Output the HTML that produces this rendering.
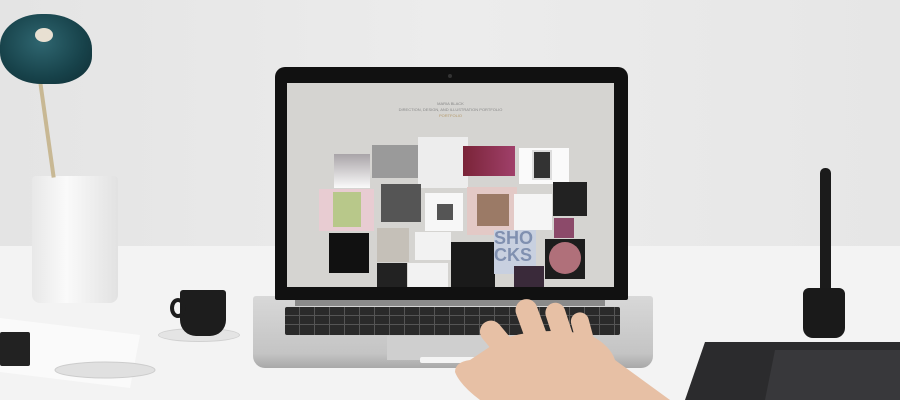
<!DOCTYPE html><html style="overflow:hidden;width:900px;height:400px"><head><style>
body{margin:0;width:900px;height:400px;overflow:hidden;background:#ebebeb;font-family:"Liberation Sans",sans-serif}
#w{position:relative;width:900px;height:400px;overflow:hidden}
#w div{position:absolute;box-sizing:border-box}
</style></head><body><div id="w">
<div style="left:0;top:0;width:900px;height:248px;background:linear-gradient(90deg,#e4e4e4,#ececec 50%,#e6e6e6)"></div>
<div style="left:0;top:246px;width:900px;height:154px;background:#f3f3f3"></div>
<div style="left:32px;top:176px;width:86px;height:127px;background:linear-gradient(90deg,#e8e8e8,#fafafa 40%,#e2e2e2);border-radius:4px 4px 8px 8px"></div>
<div style="left:45px;top:82px;width:4px;height:96px;background:#c8b894;transform:rotate(-8deg)"></div>
<div style="left:0;top:14px;width:92px;height:70px;background:radial-gradient(ellipse at 45% 40%,#2f6670,#17424a 60%,#0f2c33);border-radius:45% 50% 40% 45%"></div>
<div style="left:35px;top:28px;width:18px;height:14px;background:#e8e0d2;border-radius:50%"></div>
<div style="left:158px;top:328px;width:82px;height:14px;border-radius:50%;background:#e4e4e4;border:1px solid #d0d0d0"></div>
<div style="left:180px;top:290px;width:46px;height:46px;background:#1d1d1d;border-radius:3px 3px 16px 16px"></div>
<div style="left:170px;top:298px;width:16px;height:20px;border:4px solid #1d1d1d;border-radius:50%"></div>
<div style="left:820px;top:168px;width:11px;height:128px;background:#1b1b1b;border-radius:5px 5px 2px 2px"></div>
<div style="left:803px;top:288px;width:42px;height:50px;background:#1a1a1a;border-radius:6px 6px 10px 10px"></div>
<div style="left:253px;top:296px;width:400px;height:72px;background:linear-gradient(#d8d8d8,#c4c4c4 80%,#a8a8a8);border-radius:3px 3px 12px 12px"></div>
<div style="left:285px;top:307px;width:335px;height:28px;background:repeating-linear-gradient(90deg,#2a2a2a 0 14px,#555 14px 15px),#2a2a2a;border-radius:2px"></div>
<div style="left:285px;top:315px;width:335px;height:1px;background:#555"></div>
<div style="left:285px;top:324px;width:335px;height:1px;background:#555"></div>
<div style="left:387px;top:336px;width:200px;height:24px;background:#cfcfcf"></div>
<div style="left:420px;top:357px;width:70px;height:6px;background:#f4f4f4;border-radius:2px"></div>
<div style="left:275px;top:67px;width:353px;height:233px;background:#111;border-radius:10px 10px 2px 2px"></div>
<div style="left:287px;top:83px;width:327px;height:204px;background:#d5d4d1"></div>
<div style="left:448px;top:74px;width:4px;height:4px;background:#333;border-radius:50%"></div>
<div style="left:295px;top:300px;width:310px;height:6px;background:#8a8a8a"></div>
<div style="left:287px;top:101px;width:327px;font-size:4px;color:#888;text-align:center;line-height:6px">MARIA BLACK<br>DIRECTION, DESIGN, AND ILLUSTRATION PORTFOLIO<br><span style="color:#b59a6a">PORTFOLIO</span></div>
<div style="left:334px;top:154px;width:36px;height:34px;background:linear-gradient(#a9a4a8,#fafafa)"></div>
<div style="left:372px;top:145px;width:46px;height:33px;background:#9a9a9a"></div>
<div style="left:418px;top:137px;width:50px;height:51px;background:#ededed"></div>
<div style="left:463px;top:146px;width:52px;height:30px;background:linear-gradient(90deg,#7a2438,#a0406a)"></div>
<div style="left:519px;top:148px;width:50px;height:36px;background:#fafafa"></div>
<div style="left:532px;top:150px;width:20px;height:30px;background:#333;border:2px solid #ddd"></div>
<div style="left:319px;top:189px;width:55px;height:42px;background:#e8ccd2"></div>
<div style="left:333px;top:192px;width:28px;height:35px;background:#b8c88a"></div>
<div style="left:381px;top:184px;width:40px;height:38px;background:#555"></div>
<div style="left:425px;top:193px;width:38px;height:38px;background:#f7f7f7"></div>
<div style="left:437px;top:204px;width:16px;height:16px;background:#555"></div>
<div style="left:467px;top:187px;width:50px;height:48px;background:#e3c9c6"></div>
<div style="left:477px;top:194px;width:32px;height:32px;background:#9b7a66"></div>
<div style="left:514px;top:194px;width:38px;height:36px;background:#f5f5f5"></div>
<div style="left:553px;top:182px;width:34px;height:34px;background:#222"></div>
<div style="left:554px;top:218px;width:20px;height:20px;background:#8c4a6a"></div>
<div style="left:329px;top:233px;width:40px;height:40px;background:#111"></div>
<div style="left:377px;top:228px;width:32px;height:34px;background:#c5c0b8"></div>
<div style="left:415px;top:232px;width:36px;height:28px;background:#f2f2f2"></div>
<div style="left:451px;top:242px;width:44px;height:45px;background:#1a1a1a"></div>
<div style="left:494px;top:230px;width:42px;height:44px;background:#c8d0e0;color:#8090b0;font-size:18px;line-height:17px;font-weight:bold">SHO<br>CKS</div>
<div style="left:545px;top:239px;width:40px;height:40px;background:#1d1d1d"></div>
<div style="left:549px;top:242px;width:32px;height:32px;background:#b0707a;border-radius:50%"></div>
<div style="left:377px;top:263px;width:30px;height:24px;background:#222"></div>
<div style="left:408px;top:263px;width:40px;height:24px;background:#f2f2f2"></div>
<div style="left:514px;top:266px;width:30px;height:21px;background:#3a2a3a"></div>
<svg style="position:absolute;left:0;top:0" width="900" height="400" viewBox="0 0 900 400">
<polygon points="0,318 140,335 130,388 0,372" fill="#fafafa"/>
<rect x="0" y="332" width="30" height="34" rx="2" fill="#222"/>
<ellipse cx="105" cy="370" rx="50" ry="8" fill="#e0e0e0" stroke="#ccc"/>
<polygon points="705,342 900,342 900,400 685,400" fill="#2b2b2d"/>
<polygon points="775,350 900,350 900,400 765,400" fill="#38383b"/>
<g fill="#e7c0a5">
<rect x="522" y="298" width="22" height="60" rx="11" transform="rotate(-20 533 328)"/>
<rect x="550" y="302" width="20" height="50" rx="10" transform="rotate(-18 560 327)"/>
<rect x="574" y="312" width="18" height="42" rx="9" transform="rotate(-15 583 333)"/>
<rect x="487" y="318" width="22" height="44" rx="11" transform="rotate(-40 498 340)"/>
<path d="M500 340 Q540 325 590 335 Q610 345 615 360 L670 400 L480 400 Q460 385 455 372 Q455 362 470 360 Z"/>
</g>
</svg>
</div></body></html>
